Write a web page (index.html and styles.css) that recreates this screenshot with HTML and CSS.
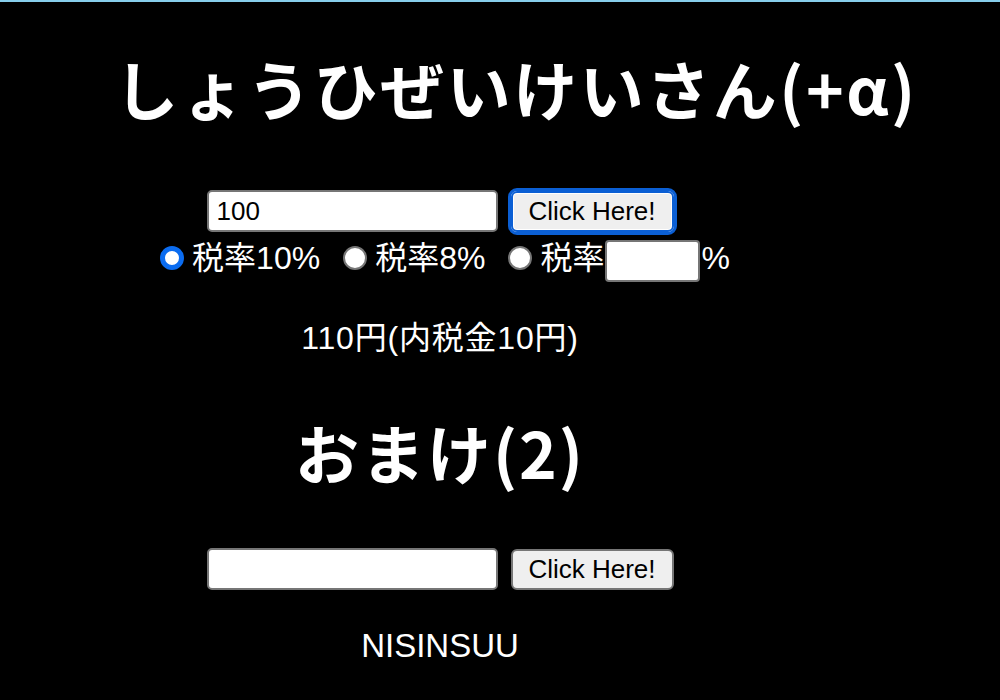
FILE: index.html
```html
<!DOCTYPE html>
<html lang="ja">
<head>
<meta charset="utf-8">
<title>しょうひぜいけいさん</title>
<link rel="stylesheet" href="styles.css">
</head>
<body>
<main class="page">
  <h1 class="title">しょうひぜいけいさん(+α)</h1>
  <div class="form-row">
    <input class="text-input" type="text" value="100">
    <button class="btn btn-focus" type="button">Click Here!</button>
  </div>
  <div class="radio-row">
    <label class="radio-item"><input class="radio" type="radio" name="rate" checked><span>税率10%</span></label>
    <label class="radio-item"><input class="radio" type="radio" name="rate"><span>税率8%</span></label>
    <label class="radio-item"><input class="radio" type="radio" name="rate"><span>税率</span><input class="rate-input" type="text"><span>%</span></label>
  </div>
  <p class="result">110円(内税金10円)</p>
  <h1 class="heading">おまけ(2)</h1>
  <div class="form-row form-row-2">
    <input class="text-input" type="text">
    <button class="btn" type="button">Click Here!</button>
  </div>
  <p class="result result-2">NISINSUU</p>
</main>
</body>
</html>
```

FILE: styles.css
```css
html, body {
  margin: 0;
  padding: 0;
  background: #000;
}
body {
  border-top: 2px solid #87ceeb;
  color: #fff;
  font-family: "Liberation Sans", "Noto Sans CJK JP", sans-serif;
  overflow: hidden;
}
.page {
  width: 880px;
  text-align: center;
}
.title {
  width: 1032px;
  margin: 48px 0 0;
  font-family: "Noto Sans CJK JP", sans-serif;
  font-size: 64px;
  line-height: 74px;
  font-weight: 700;
  letter-spacing: 2.5px;
  white-space: nowrap;
}
.heading {
  margin: 56px 0 0;
  font-family: "Noto Sans CJK JP", sans-serif;
  font-size: 64px;
  line-height: 74px;
  font-weight: 700;
  letter-spacing: 2px;
}
.form-row {
  margin-top: 66px;
  display: flex;
  justify-content: center;
  align-items: center;
  gap: 13px;
  height: 42px;
}
.form-row-2 {
  margin-top: 60px;
}
.text-input {
  box-sizing: border-box;
  width: 291px;
  height: 42px;
  margin: 0;
  padding: 2px 8px;
  border: 2px solid #767676;
  border-radius: 5px;
  background: #fff;
  color: #000;
  font-family: "Liberation Sans", Arial, sans-serif;
  font-size: 26px;
  outline: none;
}
.btn {
  box-sizing: border-box;
  width: 163px;
  height: 41px;
  margin: 0;
  padding: 0;
  border: 2px solid #767676;
  border-radius: 6px;
  background: #efefef;
  color: #000;
  font-family: "Liberation Sans", Arial, sans-serif;
  font-size: 26px;
}
.btn-focus {
  outline: 3px solid #0b5fd4;
  outline-offset: 0;
  border-color: #0b5fd4;
  box-shadow: 0 0 0 1px #fff, inset 0 0 0 1px #fff;
}
.radio-row {
  margin-top: 8px;
  height: 42px;
  display: flex;
  justify-content: center;
  align-items: center;
  gap: 23px;
  padding-left: 10px;
  font-size: 32px;
  line-height: 42px;
}
.radio-item {
  display: flex;
  align-items: center;
}
.radio-item span {
  position: relative;
  top: -3px;
}
.radio {
  appearance: none;
  -webkit-appearance: none;
  box-sizing: border-box;
  width: 24px;
  height: 24px;
  margin: 0 8px 0 0;
  border: 2px solid #767676;
  border-radius: 50%;
  background: #fff;
  position: relative;
  top: -3px;
}
.radio:checked {
  border: 5px solid #0b6cf0;
  background: #fff;
}
.rate-input {
  box-sizing: border-box;
  width: 95px;
  height: 42px;
  margin: 0 1px;
  border: 2px solid #767676;
  border-radius: 4px;
  background: #fff;
  outline: none;
}
.result {
  margin: 36px 0 0;
  font-size: 32px;
  line-height: 40px;
  font-weight: 400;
  letter-spacing: 0.8px;
}
.result-2 {
  margin-top: 36px;
  font-size: 33px;
  letter-spacing: 0;
}
```
